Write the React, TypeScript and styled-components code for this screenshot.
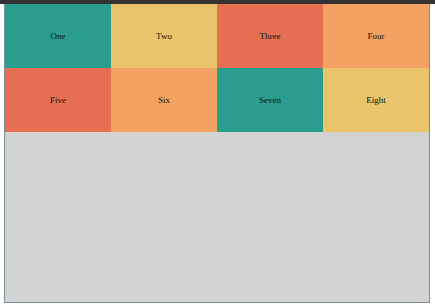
import React from "react";
import styled, { createGlobalStyle } from "styled-components";

const Global = createGlobalStyle`
  html, body { margin: 0; padding: 0; background: #ffffff; }
  body { font-family: "Liberation Serif", "Times New Roman", serif; }
`;

const TopBar = styled.div`
  height: 4px;
  background: #333333;
`;

const Frame = styled.div`
  margin: 0 4px;
  width: 424px;
  height: 298px;
  background: #d3d3d3;
  border: 1px solid #7b8f98;
  border-top: none;
`;

const Grid = styled.div`
  display: grid;
  grid-template-columns: repeat(4, 106px);
  grid-auto-rows: 64px;
`;

const Cell = styled.div<{ $bg: string }>`
  display: flex;
  align-items: center;
  justify-content: center;
  background: ${(p) => p.$bg};
  color: #111111;
  font-size: 9px;
`;

const TEAL = "#2a9d8f";
const YELLOW = "#e9c46a";
const ORANGE = "#f4a261";
const RED = "#e76f51";

const items: [string, string][] = [
  ["One", TEAL],
  ["Two", YELLOW],
  ["Three", RED],
  ["Four", ORANGE],
  ["Five", RED],
  ["Six", ORANGE],
  ["Seven", TEAL],
  ["Eight", YELLOW],
];

export default function App() {
  return (
    <>
      <Global />
      <TopBar />
      <Frame>
        <Grid>
          {items.map(([label, bg]) => (
            <Cell key={label} $bg={bg}>
              {label}
            </Cell>
          ))}
        </Grid>
      </Frame>
    </>
  );
}
